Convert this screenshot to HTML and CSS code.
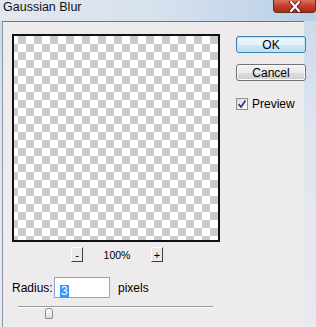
FILE: index.html
```html
<!DOCTYPE html>
<html lang="en">
<head>
  <meta charset="UTF-8">
  <title>Gaussian Blur</title>
  <link rel="stylesheet" href="styles.css">
</head>
<body>
  <div class="window">
    <div class="titlebar">
      <span class="title">Gaussian Blur</span>
      <div class="close">
        <svg width="14" height="11" viewBox="0 0 14 11">
          <path d="M3 1 L11 10 M11 1 L3 10" stroke="#5a1a12" stroke-width="4" stroke-linecap="round"/>
          <path d="M3 1 L11 10 M11 1 L3 10" stroke="#ffffff" stroke-width="2.2" stroke-linecap="round"/>
        </svg>
      </div>
    </div>

    <div class="client">
      <div class="main">
        <div class="left">
          <div class="preview"></div>
          <div class="zoom-row">
            <button class="zoom-btn">-</button>
            <span class="zoom-level">100%</span>
            <button class="zoom-btn">+</button>
          </div>
        </div>

        <div class="actions">
          <button class="btn btn-default">OK</button>
          <button class="btn btn-cancel">Cancel</button>
          <label class="check">
            <span class="box">
              <svg width="10" height="10" viewBox="0 0 10 10">
                <path d="M1.5 5 L4 8 L8.5 1.5" fill="none" stroke="#3a3a8c" stroke-width="1.8"/>
              </svg>
            </span>
            Preview
          </label>
        </div>
      </div>

      <div class="radius-row">
        <span class="radius-label">Radius:</span>
        <div class="radius-input"><span class="sel">3</span></div>
        <span class="unit">pixels</span>
      </div>

      <!-- slider -->
      <div class="slider">
        <div class="track"></div>
        <div class="thumb"></div>
      </div>
    </div>
  </div>
</body>
</html>
```

FILE: styles.css
```css
* {
  margin: 0;
  padding: 0;
  box-sizing: border-box;
  font-family: "Liberation Sans", Arial, sans-serif;
}

body {
  width: 316px;
  height: 327px;
  overflow: hidden;
  color: #000;
}

.window {
  width: 316px;
  height: 327px;
  background: linear-gradient(#c8d8ea, #dfe5ef 40%, #e9e9f0);
}

/* Title bar */
.titlebar {
  height: 21px;
  display: flex;
  background: linear-gradient(to right, #e2e8f0 0%, #d6e1ed 50%, #b8cfe7 100%);
}

.title {
  font-size: 12.5px;
  line-height: 15px;
  padding: 0 0 0 3px;
  color: #111;
}

.close {
  margin-left: auto;
  width: 43px;
  height: 13px;
  border: 1px solid #6b2a20;
  border-top: none;
  border-radius: 0 0 4px 4px;
  background: linear-gradient(#d9735f, #c2402b 50%, #a92a17);
  display: flex;
  justify-content: center;
  align-items: center;
}

/* Dialog client area */
.client {
  margin-left: 2px;
  width: 302px;
  height: 306px;
  border-left: 1px solid #8a96a3;
  border-top: 1px solid #6b7683;
  background: #eeebec;
  padding: 12px 0 0 9px;
}

.main {
  display: flex;
}

.left {
  width: 208px;
}

.preview {
  width: 208px;
  height: 208px;
  border: 2px solid #111;
  background: repeating-conic-gradient(#cbcbcb 0 25%, #ffffff 0 50%) -4px 0 / 16px 16px;
}

.zoom-row {
  display: flex;
  align-items: center;
  margin-top: 5px;
  padding-left: 59px;
  height: 15px;
}

.zoom-btn {
  width: 12px;
  height: 15px;
  border: 1px solid;
  border-color: #ffffff #404040 #404040 #ffffff;
  background: #ece9e8;
  font-size: 11px;
  line-height: 12px;
  color: #000;
}

.zoom-level {
  width: 68px;
  text-align: center;
  font-size: 10.5px;
}

/* OK / Cancel / Preview */
.actions {
  margin-left: 16px;
  width: 70px;
  display: flex;
  flex-direction: column;
}

.btn {
  width: 70px;
  height: 17px;
  margin-top: 2px;
  border: 1px solid #707070;
  border-radius: 3px;
  background: linear-gradient(#f3f3f3 0%, #ebebeb 50%, #dddddd 51%, #cfcfcf 100%);
  box-shadow: inset 0 0 0 1px #fbfbfb;
  font-size: 12px;
  line-height: 14px;
  color: #000;
}

.btn-default {
  border-color: #3c7fb1;
  background: linear-gradient(#f0f8fd 0%, #e3f2fb 50%, #cfe8f6 51%, #bcdff2 100%);
  box-shadow: inset 0 0 0 1px #c4e5f6;
}

.btn-cancel {
  margin-top: 11px;
}

.check {
  margin-top: 16px;
  display: flex;
  align-items: center;
  gap: 4px;
  font-size: 12px;
}

.box {
  width: 12px;
  height: 12px;
  border: 1px solid #8e8f8f;
  background: linear-gradient(135deg, #dcdcdc, #ffffff);
  display: flex;
  justify-content: center;
  align-items: center;
}

/* Radius field */
.radius-row {
  display: flex;
  align-items: center;
  margin-top: 15px;
  height: 21px;
}

.radius-label {
  width: 42px;
  font-size: 12px;
}

.radius-input {
  width: 56px;
  height: 21px;
  border: 1px solid #8aa5c8;
  background: #fff;
  padding: 3px 0 0 5px;
}

.sel {
  display: inline-block;
  background: #3399ff;
  color: #fff;
  font-size: 12px;
  line-height: 13px;
  padding: 0 1px;
}

.unit {
  margin-left: 8px;
  font-size: 12px;
}

/* Slider */
.slider {
  position: relative;
  margin: 8px 0 0 6px;
  width: 195px;
  height: 14px;
}

.track {
  margin-top: 6px;
  height: 2px;
  border-top: 1px solid #9a9a9a;
  border-bottom: 1px solid #ffffff;
}

.thumb {
  position: absolute;
  left: 27px;
  top: 2px;
  width: 8px;
  height: 11px;
  border: 1px solid #8a8a8a;
  border-radius: 3px 3px 1px 1px;
  background: linear-gradient(#ffffff, #dedede);
}
```
